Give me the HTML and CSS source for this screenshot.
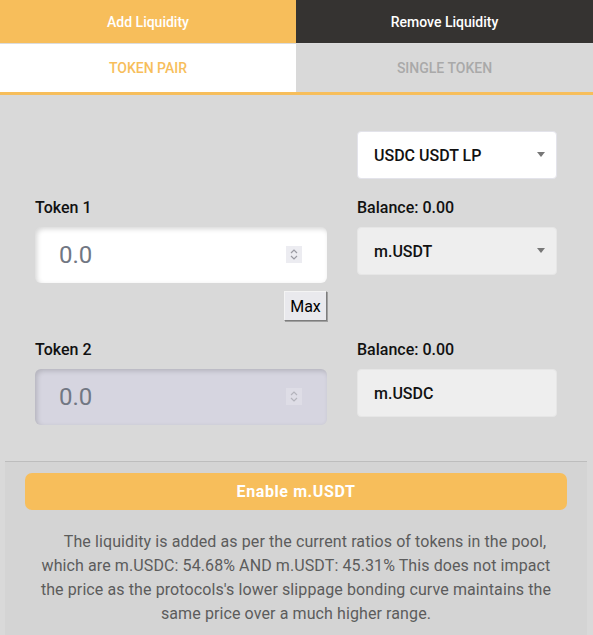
FILE: index.html
```html
<!DOCTYPE html>
<html lang="en">
<head>
<meta charset="utf-8">
<title>Add Liquidity</title>
<link rel="stylesheet" href="styles.css">
</head>
<body>
<div class="page">
  <div class="tabs">
    <div class="tab tab-active">Add Liquidity</div>
    <div class="tab tab-dark">Remove Liquidity</div>
  </div>
  <div class="subtabs">
    <div class="subtab subtab-active">TOKEN PAIR</div>
    <div class="subtab">SINGLE TOKEN</div>
  </div>
  <div class="form">
    <div class="grid">
      <div class="cell"></div>
      <div class="select select-white">
        <span>USDC USDT LP</span>
        <span class="caret"></span>
      </div>

      <div class="label">Token 1</div>
      <div class="label">Balance: 0.00</div>

      <div class="amount">
        <span class="amount-value">0.0</span>
        <span class="spin">
          <svg width="16" height="17" viewBox="0 0 16 17"><path d="M5 7 L8 4 L11 7" fill="none" stroke="#9a9aa2" stroke-width="1.2"/><path d="M5 10 L8 13 L11 10" fill="none" stroke="#9a9aa2" stroke-width="1.2"/></svg>
        </span>
      </div>
      <div class="select select-gray">
        <span>m.USDT</span>
        <span class="caret"></span>
      </div>

      <div class="max-row"><button class="max">Max</button></div>
      <div class="cell"></div>

      <div class="label label-2">Token 2</div>
      <div class="label label-2">Balance: 0.00</div>

      <div class="amount amount-disabled">
        <span class="amount-value">0.0</span>
        <span class="spin">
          <svg width="16" height="17" viewBox="0 0 16 17"><path d="M5 7 L8 4 L11 7" fill="none" stroke="#b4b4bc" stroke-width="1.2"/><path d="M5 10 L8 13 L11 10" fill="none" stroke="#b4b4bc" stroke-width="1.2"/></svg>
        </span>
      </div>
      <div class="select select-gray">
        <span>m.USDC</span>
      </div>
    </div>
  </div>
  <div class="footer">
    <button class="enable">Enable m.USDT</button>
    <p class="note">The liquidity is added as per the current ratios of tokens in the pool, which are m.USDC: 54.68% AND m.USDT: 45.31% This does not impact the price as the protocols's lower slippage bonding curve maintains the same price over a much higher range.</p>
  </div>
</div>
</body>
</html>
```

FILE: styles.css
```css
html, body {
  margin: 0;
  padding: 0;
}
body {
  background: #d9d9d9;
  font-family: Roboto, "Liberation Sans", Arial, sans-serif;
  width: 593px;
  height: 635px;
  overflow: hidden;
}
.page {
  width: 593px;
}
.tabs {
  display: flex;
  height: 43px;
  border-bottom: 1px solid #dcdcdc;
}
.tab {
  display: flex;
  align-items: center;
  justify-content: center;
  color: #ffffff;
  font-size: 14px;
  font-weight: 500;
}
.tab-active {
  width: 296px;
  background: #f7be5b;
}
.tab-dark {
  flex: 1;
  background: #353331;
}
.subtabs {
  display: flex;
  height: 48px;
  border-bottom: 3px solid #f7be5b;
}
.subtab {
  flex: 1;
  display: flex;
  align-items: center;
  justify-content: center;
  font-size: 14px;
  font-weight: 500;
  color: #a9a9a9;
  background: #d9d9d9;
}
.subtab-active {
  flex: 0 0 296px;
  background: #ffffff;
  color: #f7be5b;
}
.form {
  padding: 36px 36px 36px 35px;
}
.grid {
  display: grid;
  grid-template-columns: 292px 200px;
  column-gap: 30px;
  align-items: start;
}
.label {
  font-size: 16px;
  font-weight: 500;
  color: #111111;
  line-height: 19px;
  margin-top: 19px;
  margin-bottom: 10px;
}
.label-2 {
  margin-top: 19px;
}
.select {
  box-sizing: border-box;
  height: 48px;
  border-radius: 4px;
  border: 1px solid #e3e3ea;
  display: flex;
  align-items: center;
  justify-content: space-between;
  padding: 0 11px 0 16px;
  font-size: 16px;
  font-weight: 500;
  color: #111111;
}
.select-white {
  background: #ffffff;
}
.select-gray {
  background: #eeeeee;
  border-color: #e6e6e6;
}
.caret {
  width: 0;
  height: 0;
  border-left: 4px solid transparent;
  border-right: 4px solid transparent;
  border-top: 5px solid #777777;
  margin-top: -2px;
}
.amount {
  box-sizing: border-box;
  height: 56px;
  border-radius: 6px;
  background: #ffffff;
  box-shadow: inset 2px 2px 5px rgba(0, 0, 0, 0.16);
  display: flex;
  align-items: center;
  justify-content: space-between;
  padding: 0 25px 0 24px;
}
.amount-disabled {
  background: #d6d5e0;
}
.amount-value {
  font-size: 24px;
  color: #717783;
}
.spin {
  display: flex;
  width: 16px;
  height: 17px;
  background: #ececf1;
  margin-top: -2px;
}
.amount-disabled .spin {
  background: #dedde6;
}
.max-row {
  display: flex;
  justify-content: flex-end;
  margin-top: 8px;
}
.max {
  box-sizing: border-box;
  height: 30px;
  width: 43px;
  padding: 0;
  font-family: Roboto, "Liberation Sans", Arial, sans-serif;
  font-size: 16px;
  color: #000000;
  background: #e9e9ed;
  border: 1px solid;
  border-color: #f4f4f4 #7d7d7d #7d7d7d #f4f4f4;
  box-shadow: 1px 1px 0 #a0a0a0;
}
.cell {
  min-height: 1px;
}
.footer {
  margin: 0 6px 0 5px;
  border-top: 1px solid #bdbdbd;
  background: #d4d4d4;
  padding: 11px 20px 20px;
}
.enable {
  display: block;
  width: 100%;
  height: 37px;
  border: none;
  border-radius: 7px;
  background: #f7be5b;
  color: #ffffff;
  font-family: Roboto, "Liberation Sans", Arial, sans-serif;
  font-size: 16px;
  font-weight: 700;
  letter-spacing: 0.6px;
}
.note {
  margin: 20px 0 0;
  padding: 0 10px;
  text-align: center;
  text-indent: 18px;
  font-size: 16px;
  letter-spacing: 0.1px;
  line-height: 24px;
  color: #5c5c5c;
}
```
